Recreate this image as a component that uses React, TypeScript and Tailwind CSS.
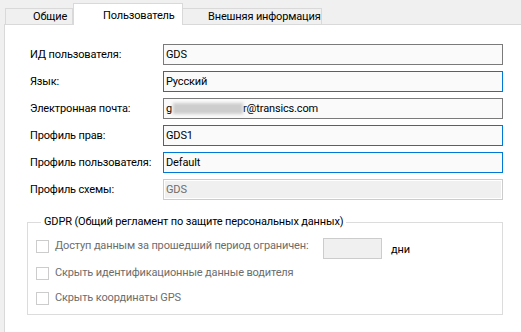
import React from "react";

const font = { fontFamily: 'Roboto, "Liberation Sans", sans-serif' };

type Field = {
  label: string;
  value: React.ReactNode;
  state: "normal" | "focus" | "disabled";
};

function Email() {
  return (
    <span className="flex items-center">
      <span>g</span>
      <span className="ml-[1px] h-[11px] w-[70px] bg-[#cdcdcd] blur-[1.5px]" />
      <span>r@transics.com</span>
    </span>
  );
}

const fields: Field[] = [
  { label: "ИД пользователя:", value: "GDS", state: "normal" },
  { label: "Язык:", value: "Русский", state: "focus" },
  { label: "Электронная почта:", value: <Email />, state: "normal" },
  { label: "Профиль прав:", value: "GDS1", state: "focus" },
  { label: "Профиль пользователя:", value: "Default", state: "focus" },
  { label: "Профиль схемы:", value: "GDS", state: "disabled" },
];

function TextBox({ field }: { field: Field }) {
  if (field.state === "disabled") {
    return (
      <div className="h-[21px] w-[340px] border border-[#cccccc] bg-white p-[1px]">
        <div className="flex h-full items-center bg-[#f0f0f0] pl-[1px] text-[#6d6d6d]">
          {field.value}
        </div>
      </div>
    );
  }
  const border = field.state === "focus" ? "border-[#0078d7]" : "border-[#7a7a7a]";
  return (
    <div
      className={`flex h-[21px] w-[340px] items-center border bg-[#fafafa] pl-[2px] text-black ${border}`}
    >
      {field.value}
    </div>
  );
}

function Checkbox() {
  return <span className="h-[13px] w-[13px] shrink-0 border border-[#cccccc] bg-white" />;
}

export default function App() {
  return (
    <div
      className="flex h-[332px] w-[521px] flex-col overflow-hidden whitespace-nowrap bg-[#f0f0f0] text-[11px] leading-[16px] tracking-[-0.15px]"
      style={font}
    >
      <div className="flex h-[24px] items-end pl-[5px]">
        <div className="h-[16px] w-[68px] border border-b-0 border-[#d9d9d9] bg-[#f0f0f0] pl-[27px] text-[#000]">
          Общие
        </div>
        <div className="relative z-10 -mb-px h-[22px] w-[110px] border border-b-0 border-[#d9d9d9] bg-white pl-[29px] pt-[4px] text-black">
          Пользователь
        </div>
        <div className="h-[16px] w-[139px] border border-b-0 border-l-0 border-[#d9d9d9] bg-[#f0f0f0] pl-[25px] text-black">
          Внешняя информация
        </div>
      </div>
      <div className="ml-[4px] flex-1 border-l border-t border-[#d9d9d9] bg-white pl-[25px] pt-[19px]">
        <div className="grid grid-cols-[133px_340px] gap-y-[6px]">
          {fields.map((f) => (
            <React.Fragment key={f.label}>
              <div className="flex items-center text-black">{f.label}</div>
              <TextBox field={f} />
            </React.Fragment>
          ))}
        </div>
        <fieldset className="ml-[-3px] mt-[14px] w-[476px] border border-[#dcdcdc] pb-[8px] pl-[8px] pt-[8px]">
          <legend className="ml-[5px] px-[3px] text-black">
            GDPR (Общий регламент по защите персональных данных)
          </legend>
          <div className="flex h-[21px] items-start">
            <span className="mt-[2px] flex">
              <Checkbox />
            </span>
            <span className="ml-[6px] w-[268px] text-[#6d6d6d]">
              Доступ данным за прошедший период ограничен:
            </span>
            <span className="h-[21px] w-[59px] border border-[#cccccc] bg-[#f0f0f0]" />
            <span className="ml-[9px] mt-[4px] text-black">дни</span>
          </div>
          <div className="mt-[6px] flex h-[16px] items-center">
            <Checkbox />
            <span className="ml-[6px] text-[#6d6d6d]">Скрыть идентификационные данные водителя</span>
          </div>
          <div className="mt-[9px] flex h-[16px] items-center">
            <Checkbox />
            <span className="ml-[6px] text-[#6d6d6d]">Скрыть координаты GPS</span>
          </div>
        </fieldset>
      </div>
    </div>
  );
}
